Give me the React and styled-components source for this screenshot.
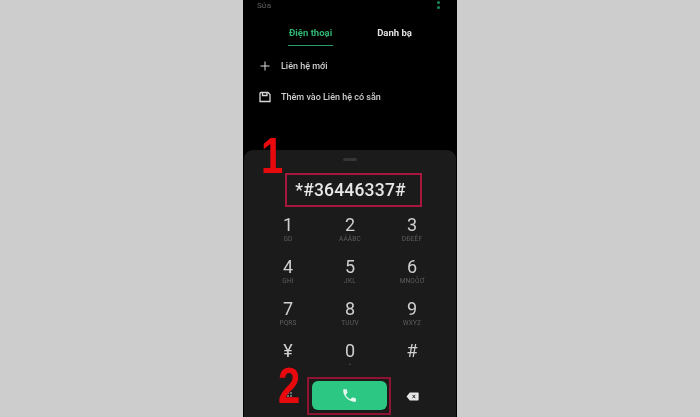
import React from "react";
import styled, { createGlobalStyle } from "styled-components";
import { Plus } from "lucide-react";

const Global = createGlobalStyle`
  html, body { margin: 0; padding: 0; background: #cdcdcd; overflow: hidden; }
  body { font-family: "Roboto", "Liberation Sans", sans-serif; }
`;
const Page = styled.div`
  width: 700px; height: 417px; display: flex; justify-content: center; background: #cdcdcd;
`;
const PhoneFrame = styled.div`
  position: relative; width: 214px; height: 417px; background: #000;
  display: flex; flex-direction: column; overflow: hidden; filter: blur(0.5px);
`;
const Top = styled.div`
  height: 150px; flex: none; display: flex; flex-direction: column;
`;
const TopBar = styled.div`
  height: 11px; display: flex; justify-content: space-between; align-items: center;
  padding: 0 17px 0 14px; color: #5f5f5f; font-size: 8px;
`;
const Dots = styled.div`
  display: flex; flex-direction: column; gap: 2px; margin-top: -6px;
  i { width: 3px; height: 3px; border-radius: 50%; background: #1c8a58; display: block; }
`;
const Tabs = styled.div`
  display: flex; margin-top: 15px; padding-left: 45px; gap: 43px; height: 19px;
`;
const Tab = styled.div`
  font-size: 9.5px; font-weight: 700; line-height: 13px; height: 19px; padding: 0 1px;
  color: ${p => (p.$active ? "#2fb673" : "#e2e2e2")};
  border-bottom: ${p => (p.$active ? "1px solid #2a9c66" : "none")};
`;
const Row = styled.div`
  display: flex; align-items: center; gap: 9px; height: 31px; padding-left: 15px;
  color: #cfcfcf; font-size: 9px; font-weight: 500;
`;
const RowList = styled.div`
  margin-top: 5px; display: flex; flex-direction: column;
`;
const Sheet = styled.div`
  flex: 1; margin: 0 1px; background: #1b1b1b; border-radius: 9px 9px 0 0;
  display: flex; flex-direction: column; align-items: center;
`;
const Handle = styled.div`
  width: 14px; height: 3px; margin-top: 8px; border-radius: 2px; background: #363636;
`;
const NumberBox = styled.div`
  margin: 12px 0 0 7px; width: 137px; height: 34px; box-sizing: border-box; padding-right: 6px;
  border: 2px solid #a8183c; display: flex; align-items: center; justify-content: center;
  color: #e8e8e8; font-size: 17.5px; font-weight: 500; letter-spacing: 0.2px; font-family: "Roboto", sans-serif;
`;
const Keypad = styled.div`
  width: 186px; margin-top: 5px; display: grid; grid-template-columns: repeat(3, 62px);
  grid-auto-rows: 42px;
`;
const Key = styled.div`
  display: flex; flex-direction: column; align-items: center; padding-top: 2px;
`;
const Digit = styled.div`
  color: #cfcfcf; font-size: 18px; line-height: 21px; font-weight: 400;
`;
const Letters = styled.div`
  color: #5e5e5e; font-size: 6.5px; line-height: 8px; letter-spacing: 0.2px;
`;
const Actions = styled.div`
  width: 186px; margin-top: -3px; display: grid; grid-template-columns: repeat(3, 62px); align-items: center; justify-items: center;
`;
const GridDots = styled.div`
  display: grid; grid-template-columns: repeat(3, 2px); gap: 1px; opacity: .6;
  i { width: 2px; height: 2px; background: #aaa; display: block; }
`;
const CallFrame = styled.div`
  box-sizing: border-box; width: 84px; height: 38px; flex: none; padding: 2px 2px 3px 3px;
  border: 2px solid #8e1431; display: flex; margin-left: -3px;
`;
const CallButton = styled.div`
  flex: 1; background: #2cc782; border-radius: 6px; display: flex; align-items: center; justify-content: center; color: #e6f7ee;
`;
const Annotation = styled.div`
  position: absolute; left: ${p => p.$x}px; top: ${p => p.$y}px; color: #e8090f;
  font-family: "Liberation Sans", sans-serif; font-weight: 700; font-size: 50px; line-height: 36px;
  transform: scaleX(0.8); transform-origin: left top;
`;

const keys = [
  ["1", "GD"], ["2", "AÄÂBC"], ["3", "DĐEÊF"],
  ["4", "GHI"], ["5", "JKL"], ["6", "MNOÔƠ"],
  ["7", "PQRS"], ["8", "TUƯV"], ["9", "WXYZ"],
  ["¥", ""], ["0", "•"], ["#", ""],
];

export default function App() {
  return (
    <Page>
      <Global />
      <PhoneFrame>
        <Top>
          <TopBar>
            <span>Sửa</span>
            <Dots><i /><i /><i /></Dots>
          </TopBar>
          <Tabs>
            <Tab $active>Điện thoại</Tab>
            <Tab>Danh bạ</Tab>
          </Tabs>
          <RowList>
            <Row><Plus size={14} strokeWidth={1.7} color="#e0e0e0" />Liên hệ mới</Row>
            <Row>
              <svg width="14" height="14" viewBox="0 0 14 14" fill="none" stroke="#d6d6d6" strokeWidth="1.3">
                <path d="M3 2.5h7L12 4.5V11.5H2V3.5a1 1 0 0 1 1-1z" />
                <path d="M4.5 2.5V5.5h4.5V2.5" />
              </svg>
              Thêm vào Liên hệ có sẵn
            </Row>
          </RowList>
        </Top>
        <Sheet>
          <Handle />
          <NumberBox>*#36446337#</NumberBox>
          <Keypad>
            {keys.map(([d, l]) => (
              <Key key={d}>
                <Digit>{d}</Digit>
                <Letters>{l}</Letters>
              </Key>
            ))}
          </Keypad>
          <Actions>
            <GridDots>{Array.from({ length: 9 }, (_, i) => <i key={i} />)}</GridDots>
            <CallFrame>
              <CallButton>
                <svg width="17" height="17" viewBox="0 0 24 24" fill="currentColor">
                  <path d="M6.62 10.79c1.44 2.83 3.76 5.14 6.59 6.59l2.2-2.2c.27-.27.67-.36 1.02-.24 1.12.37 2.33.57 3.57.57.55 0 1 .45 1 1V20c0 .55-.45 1-1 1-9.39 0-17-7.61-17-17 0-.55.45-1 1-1h3.5c.55 0 1 .45 1 1 0 1.25.2 2.45.57 3.57.11.35.03.74-.25 1.02l-2.2 2.2z" />
                </svg>
              </CallButton>
            </CallFrame>
            <svg width="13" height="9" viewBox="0 0 14 10">
              <path d="M4 0.5H13a.8.8 0 0 1 .8.8v7.4a.8.8 0 0 1-.8.8H4L.4 5z" fill="#e6e6e6" />
              <path d="M7 3.2l3 3.6M10 3.2l-3 3.6" stroke="#1b1b1b" strokeWidth="1" />
            </svg>
          </Actions>
        </Sheet>
        <Annotation $x={18} $y={138}>1</Annotation>
        <Annotation $x={35} $y={368}>2</Annotation>
      </PhoneFrame>
    </Page>
  );
}
